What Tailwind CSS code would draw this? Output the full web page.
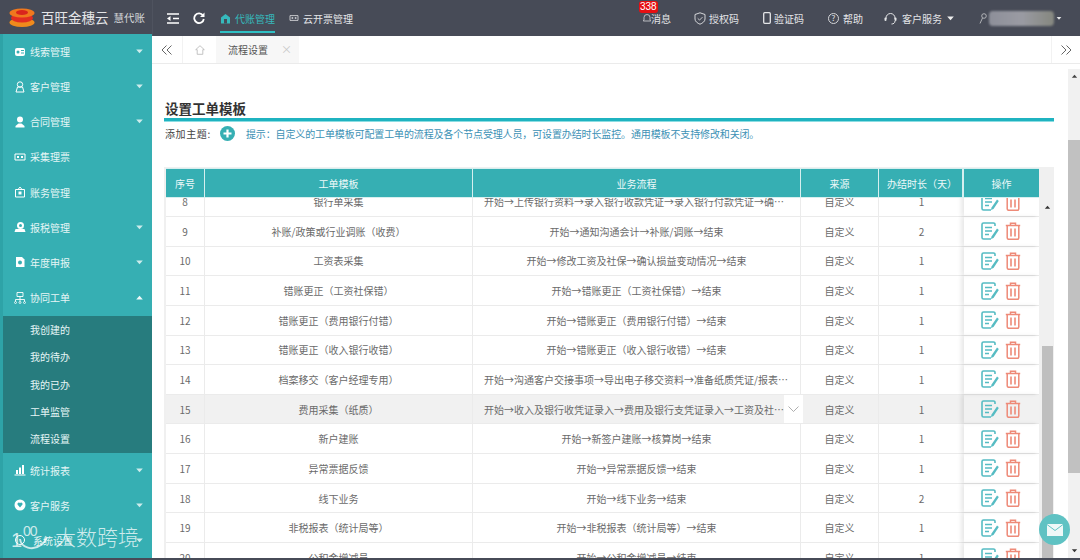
<!DOCTYPE html>
<html lang="zh-CN">
<head>
<meta charset="utf-8">
<script src="https://cdn.jsdelivr.net/npm/@tailwindcss/browser@4"></script>
</head>
<body class="m-0 w-[1080px] h-[560px] overflow-hidden bg-white font-['Noto_Sans_CJK_SC','Liberation_Sans',sans-serif] text-[10px] text-[#6a6a6a]">
<svg class="hidden" width="0" height="0">
  <defs>
    <symbol id="edit" viewBox="0 0 18 18">
      <path d="M14 4V2.500A1.500 1.500 0 0 0 12.500 1H2.500A1.500 1.500 0 0 0 1 2.500v13A1.500 1.500 0 0 0 2.500 17H10" fill="none" stroke="#56bcc3" stroke-width="1.600"/>
      <path d="M4 5.500h7M4 9h7M4 12.500h4" fill="none" stroke="#56bcc3" stroke-width="1.500"/>
      <path d="M16 6.500l1.800 1.500-5.300 8-2.500 1 .5-2.500z" fill="#56bcc3"/>
    </symbol>
    <symbol id="trash" viewBox="0 0 16 18">
      <path d="M.8 3.500h14.400M5.500 3.500V1.200h5v2.300" fill="none" stroke="#ee8a78" stroke-width="1.500"/>
      <path d="M2.200 3.500v12.300A1.500 1.500 0 0 0 3.700 17.300h8.600a1.500 1.500 0 0 0 1.500-1.500V3.500" fill="none" stroke="#ee8a78" stroke-width="1.500"/>
      <path d="M6 6.500v8M10 6.500v8" fill="none" stroke="#ee8a78" stroke-width="1.600"/>
    </symbol>
    <symbol id="caret" viewBox="0 0 10 6"><path d="M1 .5h8L5 5z" fill="currentColor"/></symbol>
    <symbol id="ticket" viewBox="0 0 12 10"><path d="M1 2h10v6H1z" fill="none" stroke="currentColor" stroke-width="1"/><path d="M3 4h2v2H3zM7 4h2v2H7z" fill="currentColor"/></symbol>
  </defs>
</svg>

<div class="flex flex-col h-[560px]">
  <div class="flex flex-1 min-h-0">
    <!-- sidebar column -->
    <div class="w-[152px] shrink-0 flex flex-col">
      <div class="h-[36px] bg-[#474b57] flex items-center pl-[9px] shrink-0">
        <svg class="w-[26px] h-[20px]" viewBox="0 0 26 20">
          <ellipse cx="13" cy="14.500" rx="12.500" ry="4.500" fill="#f08a1c"/>
          <ellipse cx="13" cy="10" rx="11" ry="4.500" fill="#e22d22"/>
          <ellipse cx="13" cy="5" rx="12.500" ry="4.500" fill="#f0781e"/>
          <ellipse cx="13" cy="4.500" rx="6" ry="2.500" fill="#d9251d"/>
        </svg>
        <span class="ml-[6px] text-[13.500px] leading-none text-[#e4e5e7]">百旺金穗云</span>
        <span class="ml-[5px] text-[10.500px] leading-none text-[#d5d6d9] pt-[1px]">慧代账</span>
      </div>
      <nav class="flex-1 min-h-0 overflow-hidden bg-[#36afb3] border-l-[3px] border-[#2ea3a7] text-[#e6f6f6] -mt-[2px] relative">
        <a class="flex items-center h-[35.150px] pl-[11px] pr-[8px]">
          <svg class="w-[12px] h-[11px] mr-[4px] text-white" viewBox="0 0 12 11"><rect x="1" y="2" width="10" height="8" rx="2" fill="currentColor"/><circle cx="4" cy="6" r="1.500" fill="#36afb3"/><path d="M7 4.500h3M7 7h3" stroke="#36afb3"/></svg>
          <span class="flex-1">线索管理</span><svg class="w-[9px] h-[5px] text-[#cdecec]"><use href="#caret"/></svg>
        </a>
        <a class="flex items-center h-[35.150px] pl-[11px] pr-[8px]">
          <svg class="w-[12px] h-[12px] mr-[4px]" viewBox="0 0 12 12"><circle cx="6" cy="3.500" r="2.700" fill="none" stroke="#fff"/><path d="M2 11l1.500-5h5L10 11z" fill="none" stroke="#fff"/></svg>
          <span class="flex-1">客户管理</span><svg class="w-[9px] h-[5px] text-[#cdecec]"><use href="#caret"/></svg>
        </a>
        <a class="flex items-center h-[35.150px] pl-[11px] pr-[8px]">
          <svg class="w-[12px] h-[12px] mr-[4px]" viewBox="0 0 12 12"><circle cx="6" cy="3.500" r="3" fill="#fff"/><path d="M1.500 11.500V10l3-2.500h3l3 2.500v1.500z" fill="#fff"/></svg>
          <span class="flex-1">合同管理</span><svg class="w-[9px] h-[5px] text-[#cdecec]"><use href="#caret"/></svg>
        </a>
        <a class="flex items-center h-[35.150px] pl-[11px] pr-[8px]">
          <svg class="w-[12px] h-[10px] mr-[4px] text-white"><use href="#ticket"/></svg>
          <span class="flex-1">采集理票</span>
        </a>
        <a class="flex items-center h-[35.150px] pl-[11px] pr-[8px]">
          <svg class="w-[12px] h-[12px] mr-[4px]" viewBox="0 0 12 12"><path d="M1.500 3.500h9v7.500h-9zM4 3.500L6 1l2 2.500" fill="none" stroke="#fff"/><path d="M4.500 5.500h3v3h-3z" fill="#fff"/></svg>
          <span class="flex-1">账务管理</span>
        </a>
        <a class="flex items-center h-[35.150px] pl-[11px] pr-[8px]">
          <svg class="w-[12px] h-[12px] mr-[4px]" viewBox="0 0 12 12"><circle cx="6.500" cy="4.500" r="3.500" fill="#fff"/><circle cx="6.500" cy="4.500" r="1.500" fill="#36afb3"/><path d="M.5 11l1-3h9l1 3z" fill="#fff"/></svg>
          <span class="flex-1">报税管理</span><svg class="w-[9px] h-[5px] text-[#cdecec]"><use href="#caret"/></svg>
        </a>
        <a class="flex items-center h-[35.150px] pl-[11px] pr-[8px]">
          <svg class="w-[12px] h-[12px] mr-[4px]" viewBox="0 0 12 12"><path d="M2 1h6l2.500 2.500V11H2z" fill="#fff"/><circle cx="6" cy="6.500" r="2" fill="#36afb3"/></svg>
          <span class="flex-1">年度申报</span><svg class="w-[9px] h-[5px] text-[#cdecec]"><use href="#caret"/></svg>
        </a>
        <a class="flex items-center h-[35.150px] pl-[11px] pr-[8px]">
          <svg class="w-[12px] h-[12px] mr-[4px]" viewBox="0 0 12 12"><path d="M3 .5h6v4H3zM6 4.500v3M1.500 9.500v-2h9v2M6 7.500v2" fill="none" stroke="#fff" stroke-width=".900"/><circle cx="1.500" cy="10.500" r="1" fill="none" stroke="#fff" stroke-width=".800"/><circle cx="6" cy="10.500" r="1" fill="none" stroke="#fff" stroke-width=".800"/><circle cx="10.500" cy="10.500" r="1" fill="none" stroke="#fff" stroke-width=".800"/></svg>
          <span class="flex-1">协同工单</span><svg class="w-[9px] h-[5px] text-[#eef9f9] rotate-180"><use href="#caret"/></svg>
        </a>
        <div class="-ml-[3px] mt-[0.500px] border-l-[3px] border-[#1f7e80] bg-[#277c7e] pl-[27px]">
          <a class="flex items-center h-[27.400px]">我创建的</a>
          <a class="flex items-center h-[27.400px]">我的待办</a>
          <a class="flex items-center h-[27.400px]">我的已办</a>
          <a class="flex items-center h-[27.400px]">工单监管</a>
          <a class="flex items-center h-[27.400px]">流程设置</a>
        </div>
        <a class="flex items-center h-[35.150px] pl-[11px] pr-[8px]">
          <svg class="w-[12px] h-[12px] mr-[4px]" viewBox="0 0 12 12"><path d="M2 6h2v4H2zM5 3.500h2V10H5zM8 1h2v9H8zM.5 10.500h11v1H.5z" fill="#fff"/></svg>
          <span class="flex-1">统计报表</span><svg class="w-[9px] h-[5px] text-[#cdecec]"><use href="#caret"/></svg>
        </a>
        <a class="flex items-center h-[35.150px] pl-[11px] pr-[8px]">
          <svg class="w-[12px] h-[12px] mr-[4px]" viewBox="0 0 12 12"><circle cx="6" cy="6" r="5.500" fill="#fff"/><path d="M6 8.500L3.500 5.500a1.500 1.500 0 0 1 2.500-1.500 1.500 1.500 0 0 1 2.500 1.500z" fill="#36afb3"/></svg>
          <span class="flex-1">客户服务</span><svg class="w-[9px] h-[5px] text-[#cdecec]"><use href="#caret"/></svg>
        </a>
        <a class="flex items-center h-[35.150px] pl-[11px] pr-[8px]">
          <svg class="w-[12px] h-[12px] mr-[4px]" viewBox="0 0 12 12"><circle cx="6" cy="6" r="4.500" fill="none" stroke="#fff"/></svg>
          <span class="flex-1 pl-[3px]">系统设置</span><svg class="w-[9px] h-[5px] text-[#cdecec]"><use href="#caret"/></svg>
        </a>
        <!-- watermark over the sidebar -->
        <div class="absolute left-[7px] top-[491px] w-[140px] h-[28px] text-white/75">
          <span class="absolute left-[1px] top-[5px] font-['Liberation_Sans',sans-serif] text-[20px] leading-none font-light">1</span>
          <span class="absolute left-[13px] top-[-1px] font-['Liberation_Sans',sans-serif] text-[14px] leading-none tracking-[-1px] font-light">00</span>
          <svg class="absolute left-[7px] top-[8px] w-[36px] h-[18px]" viewBox="0 0 36 18"><path d="M3 6c1 9 13 12 21 6 3-2 5-5 6-8" fill="none" stroke="currentColor" stroke-width="2"/></svg>
          <span class="absolute left-[45px] top-[1px] text-[21px] leading-none whitespace-nowrap font-light">大数跨境</span>
        </div>
      </nav>
    </div>

    <!-- main column -->
    <div class="flex-1 min-w-0 flex flex-col">
      <header class="h-[36px] bg-[#474b57] text-[#e4e5e7] flex items-center shrink-0 border-l border-[#4f535f] pl-[14px]">
        <svg class="w-[12px] h-[11px]" viewBox="0 0 12 11"><path d="M0 1h12M6 5.500h6M0 10h12" stroke="#fff" stroke-width="1.500"/><path d="M0 5.500L3.500 3v5z" fill="#fff"/></svg>
        <svg class="ml-[14px] w-[12px] h-[12px]" viewBox="0 0 12 12"><path d="M10 3.500A4.800 4.800 0 1 0 10.800 7" fill="none" stroke="#fff" stroke-width="1.800"/><path d="M11.500 .500v4.500H7z" fill="#fff"/></svg>
        <div class="ml-[15px] relative h-[36px] w-[55px] flex items-center text-[#36b9bc]">
          <svg class="w-[11px] h-[11px] mr-[4px]" viewBox="0 0 11 11"><path d="M1 4.500L5.500 1 10 4.500V10.500H1z" fill="#36b9bc"/><rect x="4" y="6" width="3" height="4.500" fill="#474b57"/></svg>
          <span class="whitespace-nowrap">代账管理</span>
          <div class="absolute left-0 right-0 bottom-[3px] h-[2px] bg-[#2fc0c4]"></div>
        </div>
        <svg class="ml-[14px] w-[10px] h-[8px] text-[#e4e5e7]"><use href="#ticket"/></svg>
        <span class="ml-[4px] whitespace-nowrap">云开票管理</span>

        <div class="ml-[287px] relative flex items-center w-[31px] justify-end">
          <svg class="absolute left-[3px] top-[3px] w-[8px] h-[9px]" viewBox="0 0 8 9"><path d="M1 6V3.500a3 3 0 0 1 6 0V6l.7 1H.3z" fill="none" stroke="#d5d6d9" stroke-width=".800"/></svg>
          <span>消息</span>
          <span class="absolute -left-[1px] -top-[10px] bg-[#e60f12] text-white rounded-[3px] px-[1px] h-[12px] leading-[12px] text-[10px] font-['Liberation_Sans',sans-serif]">338</span>
        </div>
        <svg class="ml-[23px] w-[12px] h-[13px] mr-[3px]" viewBox="0 0 12 13"><path d="M6 .8l5 1.700v4.500c0 2.500-2.500 4.200-5 5.200-2.500-1-5-2.700-5-5.200V2.500z" fill="none" stroke="#d5d6d9"/><path d="M3.700 6.300l1.800 1.800 3-3" fill="none" stroke="#d5d6d9" stroke-width=".900"/></svg>
        <span>授权码</span>
        <svg class="ml-[24px] w-[8px] h-[12px] mr-[3px]" viewBox="0 0 8 12"><rect x=".7" y=".7" width="6.600" height="10.600" rx="1" fill="none" stroke="#e4e5e7" stroke-width="1.300"/></svg>
        <span>验证码</span>
        <span class="ml-[24px] w-[11px] h-[11px] mr-[4px] rounded-full border border-[#d5d6d9] flex items-center justify-center text-[8px] leading-none">?</span>
        <span>帮助</span>
        <svg class="ml-[21px] w-[13px] h-[13px] mr-[5px]" viewBox="0 0 13 13"><path d="M2 7V6a4.500 4.500 0 0 1 9 0v1" fill="none" stroke="#e4e5e7"/><rect x=".5" y="5.500" width="2" height="3.500" rx="1" fill="#e4e5e7"/><rect x="10.500" y="5.500" width="2" height="3.500" rx="1" fill="#e4e5e7"/><path d="M11 9c0 2-1.500 3-3.500 3" fill="none" stroke="#e4e5e7"/></svg>
        <span class="whitespace-nowrap">客户服务</span>
        <svg class="ml-[4px] w-[9px] h-[5px] text-[#f0f0f0]"><use href="#caret"/></svg>
        <svg class="ml-[24px] w-[8px] h-[11px]" viewBox="0 0 8 11"><circle cx="5" cy="3" r="2.300" fill="none" stroke="#c9cacd" stroke-width=".800"/><path d="M3.500 5L1 10.500" stroke="#c9cacd" stroke-width=".800"/></svg>
        <div class="ml-[2px] w-[65px] h-[15px] rounded-[4px] bg-gradient-to-r from-[#8d8f99] via-[#9a9ba3] to-[#85877f] blur-[1px]"></div>
        <svg class="ml-[2px] w-[6px] h-[5px] text-[#e4e5e7]"><use href="#caret"/></svg>
      </header>

      <div class="h-[28px] shrink-0 flex items-stretch border-b border-[#ebebeb] bg-white">
        <div class="w-[31px] border-r border-[#f2f2f2] flex items-center justify-center pr-[2px]">
          <svg class="w-[11px] h-[10px]" viewBox="0 0 11 10"><path d="M5.500 .5L1 5l4.500 4.500M10.500 .5L6 5l4.500 4.500" fill="none" stroke="#555" stroke-width=".900"/></svg>
        </div>
        <div class="w-[33px] flex items-center justify-center">
          <svg class="w-[10px] h-[10px]" viewBox="0 0 10 10"><path d="M5 .7L.7 4.700h1.500V9.300h5.600V4.700h1.500z" fill="none" stroke="#b5b5b5" stroke-width=".800"/></svg>
        </div>
        <div class="w-[83px] bg-[#f7f7f7] flex items-center pl-[12px] text-[#555]">
          <span class="whitespace-nowrap">流程设置</span>
          <span class="ml-[13px] text-[#c8c8c8] text-[11px] leading-none">×</span>
        </div>
        <div class="flex-1"></div>
        <div class="w-[29px] border-l border-[#f2f2f2] flex items-center justify-center">
          <svg class="w-[11px] h-[10px]" viewBox="0 0 11 10"><path d="M.5 .5L5 5 .5 9.500M5.500 .5L10 5 5.500 9.500" fill="none" stroke="#555" stroke-width=".900"/></svg>
        </div>
      </div>

      <div class="flex-1 min-h-0 flex">
        <!-- page content -->
        <div class="flex-1 min-w-0 overflow-hidden pl-[12px] pr-[14px] pt-[35px]">
          <h2 class="text-[13.500px] leading-[18px] font-bold text-[#333] h-[19px] pl-[1px]">设置工单模板</h2>
          <div class="h-[4px] bg-[#1fb3c0] border-b border-[#8cdde2]"></div>
          <div class="flex items-center h-[22px]">
            <span class="ml-[1px] text-[#444] w-[47px] whitespace-nowrap tracking-[0.600px]">添加主题:</span>
            <span class="ml-[8px] w-[15px] h-[15px] rounded-full bg-[#36afb3] flex items-center justify-center">
              <svg class="w-[9px] h-[9px]" viewBox="0 0 9 9"><path d="M4.500 .5v8M.5 4.500h8" stroke="#fff" stroke-width="2.200"/></svg>
            </span>
            <span class="ml-[11px] text-[#3c91b5] whitespace-nowrap tracking-[-0.130px]">提示：自定义的工单模板可配置工单的流程及各个节点受理人员，可设置办结时长监控。通用模板不支持修改和关闭。</span>
          </div>

          <!-- table -->
          <div class="mt-[23px] bg-[#f0f0f0] pt-[1px] pl-[2px] flex h-[500px]">
            <div class="w-[873px] shrink-0 flex flex-col">
              <div class="flex h-[30px] shrink-0 text-[#eef9f9] bg-[#36afb3] border-t border-[#d6efef] border-b">
                <div class="w-[39px] flex items-center justify-center border-r border-[#d6efef]">序号</div>
                <div class="w-[268px] flex items-center justify-center border-r border-[#d6efef]">工单模板</div>
                <div class="w-[328px] flex items-center justify-center border-r border-[#d6efef]">业务流程</div>
                <div class="w-[78px] flex items-center justify-center border-r border-[#d6efef]">来源</div>
                <div class="w-[85px] flex items-center justify-center border-r-2 border-[#d6efef] whitespace-nowrap pl-[3px]">办结时长（天）</div>
                <div class="flex-1 flex items-center justify-center">操作</div>
              </div>
              <div class="flex-1 min-h-0 overflow-hidden bg-white">
                <div class="-mt-[10.700px]">
                  <div class="flex h-[29.650px] border-b border-[#ebebeb]">
                    <div class="w-[39px] flex items-center justify-center border-r border-[#ebebeb]">8</div>
                    <div class="w-[268px] flex items-center justify-center border-r border-[#ebebeb]">银行单采集</div>
                    <div class="w-[328px] flex items-center pl-[11px] border-r border-[#ebebeb] whitespace-nowrap">开始→上传银行资料→录入银行收款凭证→录入银行付款凭证→确…</div>
                    <div class="w-[78px] flex items-center justify-center border-r border-[#ebebeb]">自定义</div>
                    <div class="w-[85px] flex items-center justify-center">1</div>
                    <div class="flex-1 flex items-center pl-[17px] gap-[6px] shadow-[-3px_0_4px_rgba(0,0,0,0.09)]"><svg class="w-[18px] h-[18px]"><use href="#edit"/></svg><svg class="w-[16px] h-[18px]"><use href="#trash"/></svg></div>
                  </div>
                  <div class="flex h-[29.650px] border-b border-[#ebebeb]">
                    <div class="w-[39px] flex items-center justify-center border-r border-[#ebebeb]">9</div>
                    <div class="w-[268px] flex items-center justify-center border-r border-[#ebebeb]">补账/政策或行业调账（收费）</div>
                    <div class="w-[328px] flex items-center justify-center border-r border-[#ebebeb]">开始→通知沟通会计→补账/调账→结束</div>
                    <div class="w-[78px] flex items-center justify-center border-r border-[#ebebeb]">自定义</div>
                    <div class="w-[85px] flex items-center justify-center">2</div>
                    <div class="flex-1 flex items-center pl-[17px] gap-[6px] shadow-[-3px_0_4px_rgba(0,0,0,0.09)]"><svg class="w-[18px] h-[18px]"><use href="#edit"/></svg><svg class="w-[16px] h-[18px]"><use href="#trash"/></svg></div>
                  </div>
                  <div class="flex h-[29.650px] border-b border-[#ebebeb]">
                    <div class="w-[39px] flex items-center justify-center border-r border-[#ebebeb]">10</div>
                    <div class="w-[268px] flex items-center justify-center border-r border-[#ebebeb]">工资表采集</div>
                    <div class="w-[328px] flex items-center justify-center border-r border-[#ebebeb]">开始→修改工资及社保→确认损益变动情况→结束</div>
                    <div class="w-[78px] flex items-center justify-center border-r border-[#ebebeb]">自定义</div>
                    <div class="w-[85px] flex items-center justify-center">1</div>
                    <div class="flex-1 flex items-center pl-[17px] gap-[6px] shadow-[-3px_0_4px_rgba(0,0,0,0.09)]"><svg class="w-[18px] h-[18px]"><use href="#edit"/></svg><svg class="w-[16px] h-[18px]"><use href="#trash"/></svg></div>
                  </div>
                  <div class="flex h-[29.650px] border-b border-[#ebebeb]">
                    <div class="w-[39px] flex items-center justify-center border-r border-[#ebebeb]">11</div>
                    <div class="w-[268px] flex items-center justify-center border-r border-[#ebebeb]">错账更正（工资社保错）</div>
                    <div class="w-[328px] flex items-center justify-center border-r border-[#ebebeb]">开始→错账更正（工资社保错）→结束</div>
                    <div class="w-[78px] flex items-center justify-center border-r border-[#ebebeb]">自定义</div>
                    <div class="w-[85px] flex items-center justify-center">1</div>
                    <div class="flex-1 flex items-center pl-[17px] gap-[6px] shadow-[-3px_0_4px_rgba(0,0,0,0.09)]"><svg class="w-[18px] h-[18px]"><use href="#edit"/></svg><svg class="w-[16px] h-[18px]"><use href="#trash"/></svg></div>
                  </div>
                  <div class="flex h-[29.650px] border-b border-[#ebebeb]">
                    <div class="w-[39px] flex items-center justify-center border-r border-[#ebebeb]">12</div>
                    <div class="w-[268px] flex items-center justify-center border-r border-[#ebebeb]">错账更正（费用银行付错）</div>
                    <div class="w-[328px] flex items-center justify-center border-r border-[#ebebeb]">开始→错账更正（费用银行付错）→结束</div>
                    <div class="w-[78px] flex items-center justify-center border-r border-[#ebebeb]">自定义</div>
                    <div class="w-[85px] flex items-center justify-center">1</div>
                    <div class="flex-1 flex items-center pl-[17px] gap-[6px] shadow-[-3px_0_4px_rgba(0,0,0,0.09)]"><svg class="w-[18px] h-[18px]"><use href="#edit"/></svg><svg class="w-[16px] h-[18px]"><use href="#trash"/></svg></div>
                  </div>
                  <div class="flex h-[29.650px] border-b border-[#ebebeb]">
                    <div class="w-[39px] flex items-center justify-center border-r border-[#ebebeb]">13</div>
                    <div class="w-[268px] flex items-center justify-center border-r border-[#ebebeb]">错账更正（收入银行收错）</div>
                    <div class="w-[328px] flex items-center justify-center border-r border-[#ebebeb]">开始→错账更正（收入银行收错）→结束</div>
                    <div class="w-[78px] flex items-center justify-center border-r border-[#ebebeb]">自定义</div>
                    <div class="w-[85px] flex items-center justify-center">1</div>
                    <div class="flex-1 flex items-center pl-[17px] gap-[6px] shadow-[-3px_0_4px_rgba(0,0,0,0.09)]"><svg class="w-[18px] h-[18px]"><use href="#edit"/></svg><svg class="w-[16px] h-[18px]"><use href="#trash"/></svg></div>
                  </div>
                  <div class="flex h-[29.650px] border-b border-[#ebebeb]">
                    <div class="w-[39px] flex items-center justify-center border-r border-[#ebebeb]">14</div>
                    <div class="w-[268px] flex items-center justify-center border-r border-[#ebebeb]">档案移交（客户经理专用）</div>
                    <div class="w-[328px] flex items-center pl-[11px] border-r border-[#ebebeb] whitespace-nowrap">开始→沟通客户交接事项→导出电子移交资料→准备纸质凭证/报表…</div>
                    <div class="w-[78px] flex items-center justify-center border-r border-[#ebebeb]">自定义</div>
                    <div class="w-[85px] flex items-center justify-center">1</div>
                    <div class="flex-1 flex items-center pl-[17px] gap-[6px] shadow-[-3px_0_4px_rgba(0,0,0,0.09)]"><svg class="w-[18px] h-[18px]"><use href="#edit"/></svg><svg class="w-[16px] h-[18px]"><use href="#trash"/></svg></div>
                  </div>
                  <div class="flex h-[29.650px] border-b border-[#ebebeb] bg-[#f1f1f1]">
                    <div class="w-[39px] flex items-center justify-center border-r border-[#ebebeb]">15</div>
                    <div class="w-[268px] flex items-center justify-center border-r border-[#ebebeb]">费用采集（纸质）</div>
                    <div class="w-[328px] flex items-center pl-[11px] border-r border-[#ebebeb] whitespace-nowrap">
                      <span class="flex-1">开始→收入及银行收凭证录入→费用及银行支凭证录入→工资及社…</span>
                      <span class="w-[19px] self-stretch bg-white flex items-center justify-center shrink-0"><svg class="w-[11px] h-[6px]" viewBox="0 0 11 6"><path d="M.5 .5l5 5 5-5" fill="none" stroke="#999" stroke-width=".800"/></svg></span>
                    </div>
                    <div class="w-[78px] flex items-center justify-center border-r border-[#ebebeb]">自定义</div>
                    <div class="w-[85px] flex items-center justify-center">1</div>
                    <div class="flex-1 flex items-center pl-[17px] gap-[6px] shadow-[-3px_0_4px_rgba(0,0,0,0.09)]"><svg class="w-[18px] h-[18px]"><use href="#edit"/></svg><svg class="w-[16px] h-[18px]"><use href="#trash"/></svg></div>
                  </div>
                  <div class="flex h-[29.650px] border-b border-[#ebebeb]">
                    <div class="w-[39px] flex items-center justify-center border-r border-[#ebebeb]">16</div>
                    <div class="w-[268px] flex items-center justify-center border-r border-[#ebebeb]">新户建账</div>
                    <div class="w-[328px] flex items-center justify-center border-r border-[#ebebeb]">开始→新签户建账→核算岗→结束</div>
                    <div class="w-[78px] flex items-center justify-center border-r border-[#ebebeb]">自定义</div>
                    <div class="w-[85px] flex items-center justify-center">1</div>
                    <div class="flex-1 flex items-center pl-[17px] gap-[6px] shadow-[-3px_0_4px_rgba(0,0,0,0.09)]"><svg class="w-[18px] h-[18px]"><use href="#edit"/></svg><svg class="w-[16px] h-[18px]"><use href="#trash"/></svg></div>
                  </div>
                  <div class="flex h-[29.650px] border-b border-[#ebebeb]">
                    <div class="w-[39px] flex items-center justify-center border-r border-[#ebebeb]">17</div>
                    <div class="w-[268px] flex items-center justify-center border-r border-[#ebebeb]">异常票据反馈</div>
                    <div class="w-[328px] flex items-center justify-center border-r border-[#ebebeb]">开始→异常票据反馈→结束</div>
                    <div class="w-[78px] flex items-center justify-center border-r border-[#ebebeb]">自定义</div>
                    <div class="w-[85px] flex items-center justify-center">1</div>
                    <div class="flex-1 flex items-center pl-[17px] gap-[6px] shadow-[-3px_0_4px_rgba(0,0,0,0.09)]"><svg class="w-[18px] h-[18px]"><use href="#edit"/></svg><svg class="w-[16px] h-[18px]"><use href="#trash"/></svg></div>
                  </div>
                  <div class="flex h-[29.650px] border-b border-[#ebebeb]">
                    <div class="w-[39px] flex items-center justify-center border-r border-[#ebebeb]">18</div>
                    <div class="w-[268px] flex items-center justify-center border-r border-[#ebebeb]">线下业务</div>
                    <div class="w-[328px] flex items-center justify-center border-r border-[#ebebeb]">开始→线下业务→结束</div>
                    <div class="w-[78px] flex items-center justify-center border-r border-[#ebebeb]">自定义</div>
                    <div class="w-[85px] flex items-center justify-center">2</div>
                    <div class="flex-1 flex items-center pl-[17px] gap-[6px] shadow-[-3px_0_4px_rgba(0,0,0,0.09)]"><svg class="w-[18px] h-[18px]"><use href="#edit"/></svg><svg class="w-[16px] h-[18px]"><use href="#trash"/></svg></div>
                  </div>
                  <div class="flex h-[29.650px] border-b border-[#ebebeb]">
                    <div class="w-[39px] flex items-center justify-center border-r border-[#ebebeb]">19</div>
                    <div class="w-[268px] flex items-center justify-center border-r border-[#ebebeb]">非税报表（统计局等）</div>
                    <div class="w-[328px] flex items-center justify-center border-r border-[#ebebeb]">开始→非税报表（统计局等）→结束</div>
                    <div class="w-[78px] flex items-center justify-center border-r border-[#ebebeb]">自定义</div>
                    <div class="w-[85px] flex items-center justify-center">1</div>
                    <div class="flex-1 flex items-center pl-[17px] gap-[6px] shadow-[-3px_0_4px_rgba(0,0,0,0.09)]"><svg class="w-[18px] h-[18px]"><use href="#edit"/></svg><svg class="w-[16px] h-[18px]"><use href="#trash"/></svg></div>
                  </div>
                  <div class="flex h-[29.650px] border-b border-[#ebebeb]">
                    <div class="w-[39px] flex items-center justify-center border-r border-[#ebebeb]">20</div>
                    <div class="w-[268px] flex items-center justify-center border-r border-[#ebebeb]">公积金增减员</div>
                    <div class="w-[328px] flex items-center justify-center border-r border-[#ebebeb]">开始→公积金增减员→结束</div>
                    <div class="w-[78px] flex items-center justify-center border-r border-[#ebebeb]">自定义</div>
                    <div class="w-[85px] flex items-center justify-center">1</div>
                    <div class="flex-1 flex items-center pl-[17px] gap-[6px] shadow-[-3px_0_4px_rgba(0,0,0,0.09)]"><svg class="w-[18px] h-[18px]"><use href="#edit"/></svg><svg class="w-[16px] h-[18px]"><use href="#trash"/></svg></div>
                  </div>
                </div>
              </div>
            </div>
            <!-- table scrollbar -->
            <div class="flex-1 flex flex-col items-center pt-[37px] pl-[1px]">
              <svg class="w-[7px] h-[4px] text-[#333] rotate-180"><use href="#caret"/></svg>
              <div class="mt-[137px] w-[11px] h-[220px] bg-[#bfbfbf]"></div>
            </div>
          </div>
        </div>
        <!-- page scrollbar -->
        <div class="w-[12px] shrink-0 mt-[5px] bg-[#f1f1f1] flex flex-col items-center pt-[5px]">
          <svg class="w-[7px] h-[4px] text-[#444] rotate-180"><use href="#caret"/></svg>
          <div class="mt-[62px] w-full h-[333px] bg-[#c1c1c1]"></div>
          <div class="flex-1 flex items-end pb-[5px]"><svg class="w-[7px] h-[4px] text-[#333]"><use href="#caret"/></svg></div>
        </div>
      </div>
    </div>
  </div>
  <div class="h-[2px] shrink-0 bg-[#474b57]"></div>
</div>

<!-- floating message button -->
<div class="fixed left-[1039px] top-[514px] w-[31px] h-[31px] rounded-full bg-[#5fc2c3] flex items-center justify-center">
  <svg class="w-[16px] h-[12px]" viewBox="0 0 16 12"><path d="M0 0h16v12H0z" fill="#eef8f8"/><path d="M0 .5l8 6 8-6" fill="none" stroke="#5fc2c3" stroke-width="1"/></svg>
</div>
</body>
</html>
